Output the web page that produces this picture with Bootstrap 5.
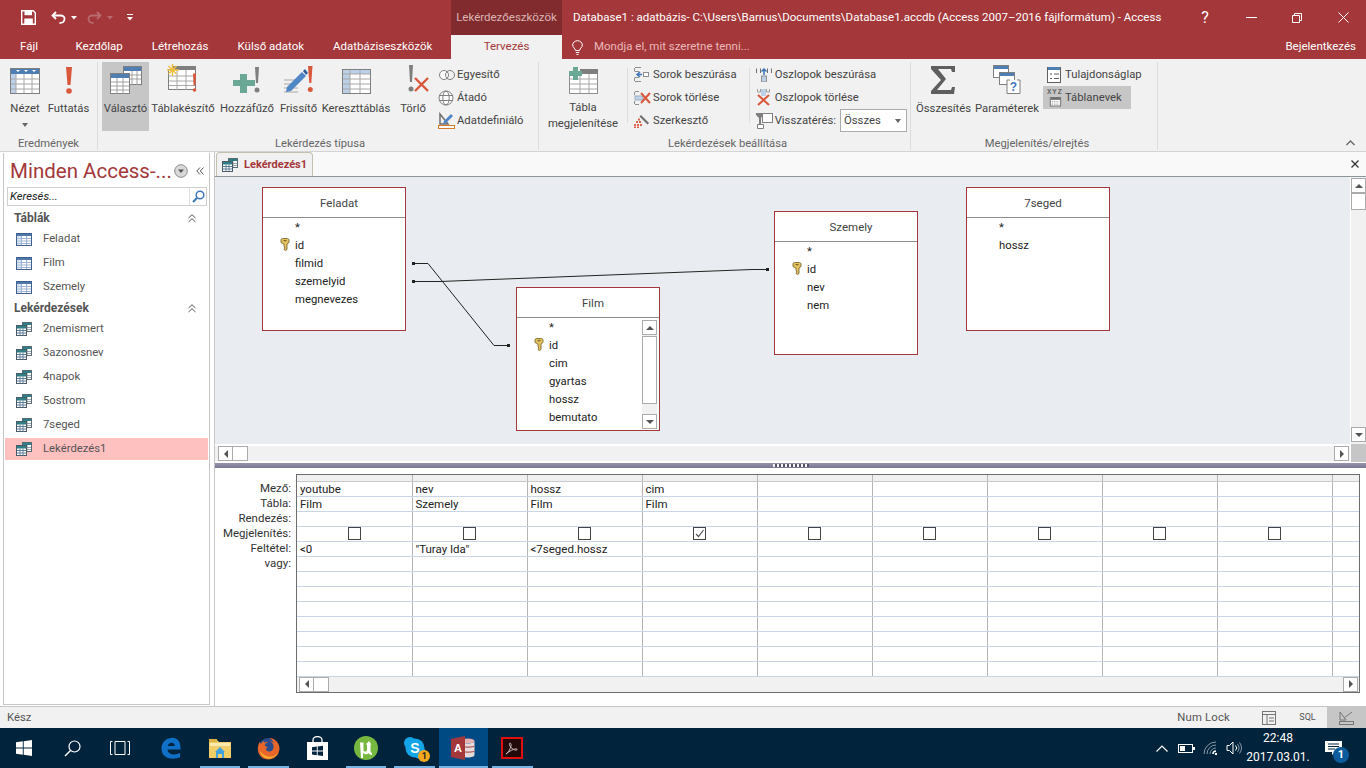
<!DOCTYPE html>
<html lang="hu">
<head>
<meta charset="UTF-8">
<title>Access</title>
<link href="https://cdn.jsdelivr.net/npm/bootstrap@5.3.0/dist/css/bootstrap.min.css" rel="stylesheet">
<style>
    html, body { height: 768px; overflow: hidden; }
    body { font-family: "Roboto", "Liberation Sans", sans-serif; font-size: 11.3px; color: #444; background: #fff; line-height: 1.2; }
    svg { display: block; flex: none; }

    /* title + tabs */
    .app-top { background: #a4373a; color: #fff; }
    .title-row { height: 35px; }
    .qat { width: 451px; flex: none; padding-left: 21px; }
    .qat-undo { margin-left: 15px; }
    .qat-caret { margin-left: 5px; }
    .qat-redo { margin-left: 10px; }
    .qat-more { margin-left: 14px; }
    .ctx-head { width: 111px; flex: none; background: #812b2e; color: #dcb4b4; font-size: 11.5px; }
    .doc-title { padding-left: 11px; font-size: 11.5px; }
    .win-btn { width: 46px; flex: none; }
    .tab-row { height: 24px; font-size: 11.5px; }
    .tab-left { width: 451px; flex: none; padding-left: 5.5px; }
    .rtab { padding: 0 14.5px; }
    .rtab-file { padding-right: 23px; }
    .rtab-on { width: 111px; flex: none; background: #f1f1f1; color: #a4373a; }
    .tell-me { color: #e9b9b9; padding-left: 10px; gap: 11px; }
    .sign-in { padding-right: 10px; }

    /* ribbon */
    .ribbon { height: 93px; background: #f1f1f1; border-bottom: 1px solid #d4d4d4; }
    .rgroup { height: 88px; margin-top: 3px; border-right: 1px solid #dcdcdc; flex: none; }
    .g-res { width: 98px; padding-left: 0; }
    .g-type { width: 441px; padding-left: 4px; }
    .g-set { width: 372px; padding-left: 6px; }
    .g-show { width: 247px; padding-left: 6px; }
    .g-res .rbody { padding-left: 4px; }
    .rbody { height: 69px; }
    .rcaption { height: 15px; line-height: 15px; margin-top: 5px; text-align: center; color: #666; font-size: 11.2px; }
    .bigbtn { height: 69px; text-align: center; color: #444; flex: none; }
    .bigbtn .ic { height: 32px; flex: none; }
    .bigbtn .lbl { margin-top: 8px; }
    .bigbtn .lbl2 { margin-top: 6px; line-height: 16px; }
    .bigbtn.on { background: #c6c6c6; }
    .w42 { width: 42px; } .w43 { width: 43px; } .w45 { width: 45px; } .w47 { width: 47px; }
    .w60 { width: 60px; } .w68 { width: 68px; } .w72 { width: 72px; } .w76 { width: 76px; }
    .w53 { width: 53px; } .w66 { width: 66px; } .w110 { width: 110px; } .w88 { width: 88px; }
    .caret-d { margin-top: 7px; width: 0; height: 0; border: 3px solid transparent; border-top: 4px solid #666; border-bottom: 0; }
    .smallcol { padding-left: 4px; }
    .smallcol-top { padding-top: 1px; }
    .smallrow { height: 23px; gap: 2px; padding: 0 3px 0 0; white-space: nowrap; }
    .smallrow.on { background: #c6c6c6; }
    .smallrow .ic { width: 17px; flex: none; }
    .show-col { margin-left: 3px; padding-top: 1px; }
    .show-col .smallrow { padding-left: 4px; gap: 3px; }
    .show-col .ic { width: 15px; }
    .rsep { width: 1px; height: 55px; background: #dcdcdc; margin: 6px 6px 0; flex: none; }
    .ret-select { width: 67px; height: 23px; background: #fff; border: 1px solid #ababab; padding: 0 5px 0 3px; margin-left: 2px; }
    .ribbon-fold { flex-grow: 1; padding-right: 11px; padding-bottom: 5px; }

    /* work area */
    .workarea { height: 554px; }
    .navwrap { width: 215px; flex: none; border-right: 1px solid #c6c6c6; padding: 1px 4px 1px 3px; }
    .navbox { height: 100%; border: 1px solid #c6c6c6; border-top: 0; padding: 0 1px; }
    .nav-title { height: 33px; padding: 3px 0 0 5px; }
    .nav-title span { font-size: 20.5px; color: #a4373a; white-space: nowrap; }
    .nav-drop { margin-left: 2px; }
    .nav-fold { margin-left: 8px; }
    .nav-search { height: 19px; margin: 1px 1px 0 2px; border: 1px solid #d0d0d0; font-style: italic; color: #222; padding-left: 2px; }
    .nav-glass { width: 17px; height: 17px; }
    .nav-head { height: 18px; padding: 0 12px 0 9px; font-weight: 700; font-size: 12px; color: #555; }
    .nav-head-first { margin-top: 3px; }
    .nav-item { height: 24px; padding-left: 11px; gap: 11px; color: #555; }
    .nav-item.on { background: #ffc0c0; height: 22px; margin-top: 1px; }

    .docpane { width: 1151px; flex: none; }
    .doctabs { height: 25px; background: #f9f9f9; border-bottom: 1px solid #8c959a; padding-left: 1px; }
    .doctab { width: 97px; height: 24px; gap: 6px; background: #f1f1f1; border: 1px solid #c4c0b0; border-bottom: 0; border-radius: 4px 4px 0 0; padding-left: 5px; color: #a4373a; font-weight: 700; font-size: 11px; }
    .doc-close { padding-right: 7px; }
    .upper { height: 285px; }
    .canvas-col { width: 1135px; flex: none; }
    .qcanvas { position: relative; height: 267px; background: #e9edf1; overflow: hidden; }
    .qlines { position: absolute; left: 0; top: 0; }
    .qtable { position: absolute; width: 144px; height: 144px; background: #fff; border: 1px solid #a4373a; color: #222; }
    .qt-feladat { left: 47px; top: 10px; }
    .qt-film { left: 301px; top: 110px; }
    .qt-szemely { left: 559px; top: 34px; }
    .qt-seged { left: 751px; top: 10px; }
    .qhead { height: 30px; line-height: 31px; text-align: center; padding-left: 10px; border-bottom: 1px solid #8c8c8c; color: #444; font-size: 11.5px; }
    .qrows { position: relative; padding: 1px 0 0 32px; }
    .qrow { height: 18px; line-height: 18px; }
    .qkey { position: absolute; left: 17px; top: 20px; }
    .qscroll { position: absolute; right: 2px; top: 32px; width: 15px; height: 109px; background: #f1f1f1; }
    .sbtn { border: 1px solid #ababab; background: #fff; }
    .sbtn-s { width: 15px; height: 15px; flex: none; }
    .qthumb { height: 68px; margin: 1px 0 10px; }
    .hbar { height: 18px; background: #f1f1f1; border-top: 2px solid #fff; border-bottom: 1px solid #fff; padding: 0 1px 0 3px; }
    .hthumb { width: 16px; height: 15px; margin-left: -1px; }
    .vbar { width: 16px; background: #f1f1f1; border-left: 1px solid #fff; flex: none; }
    .vbar-top { height: 1px; }
    .vthumb { width: 15px; height: 17px; }
    .vbar-corner { height: 18px; background: #c6c6c6; margin-top: 2px; }
    .tri-u, .tri-d, .tri-l, .tri-r { width: 0; height: 0; border: 4px solid transparent; }
    .tri-u { border-bottom-color: #555; border-top: 0; }
    .tri-d { border-top-color: #555; border-bottom: 0; }
    .tri-l { border-right-color: #555; border-left: 0; }
    .tri-r { border-left-color: #555; border-right: 0; }
    .splitter { height: 6px; background: linear-gradient(#9795ad, #7a7890); border-top: 1px solid #fff; }
    .splitter i { display: block; width: 36px; height: 3px; background: repeating-linear-gradient(90deg, #f5f5f5 0 2px, #55546a 2px 4px); }

    /* design grid */
    .lower { height: 238px; padding-top: 6px; }
    .labels { width: 81px; flex: none; padding-top: 7px; text-align: right; padding-right: 5px; color: #333; font-size: 11.5px; }
    .labels div { height: 15px; line-height: 15px; white-space: nowrap; }
    .gridbox { width: 1064px; height: 219px; border: 1px solid #6d6d6d; overflow: hidden; }
    .dgrid { table-layout: fixed; border-collapse: collapse; width: 1150px; color: #222; font-size: 11.5px; }
    .dgrid td { width: 115px; height: 15px; padding: 0 0 0 3px; line-height: 14px; border-right: 1px solid #b5b5b5; border-bottom: 1px solid #c9d4e6; white-space: nowrap; }
    .dgrid tr.hd td { height: 6px; line-height: 1px; font-size: 1px; background: #f0f0f0; border-bottom: 1px solid #c9c9c9; }
    .dgrid td.ck { padding: 0; }
    .chk { width: 13px; height: 13px; border: 1px solid #444; margin: 0 auto; background: #fff; }
    .grid-hbar { height: 16px; background: #f1f1f1; padding: 0 1px 0 2px; }

    /* status + taskbar */
    .statusbar { height: 22px; background: #f1f1f1; border-top: 1px solid #c6c6c6; padding-left: 7px; color: #555; }
    .st-view { width: 39px; height: 21px; }
    .st-view.on { background: #c6c6c6; }
    .st-sql { font-size: 9px; }
    .st-numlock { margin-right: 19px; letter-spacing: .2px; }
    .taskbar { height: 40px; background: #01233b; color: #fff; }
    .tb-cell { width: 48px; height: 40px; flex: none; }
    .tb-app { width: 48.7px; height: 40px; position: relative; flex: none; }
    .tb-first { margin-left: 3px; }
    .tb-app.run::after { content: ""; position: absolute; left: 4px; right: 4px; bottom: 0; height: 2px; background: #74b4e4; }
    .tb-app.act { background: #004a84; }
    .tb-app.act::after { left: 0; right: 0; }
    .tb-badge { position: absolute; left: 28px; top: 22px; width: 12px; height: 12px; border-radius: 50%; background: #f5a81c; color: #222; font-size: 9px; font-weight: 700; line-height: 12px; text-align: center; }
    .tray-i { width: 24px; flex: none; }
    .tb-clock { width: 64px; text-align: center; font-size: 12px; line-height: 19px; flex: none; }
    .tb-action { position: relative; width: 56px; height: 40px; padding-left: 15px; flex: none; }
    .tb-count { position: absolute; left: 23px; top: 19px; width: 16px; height: 16px; border-radius: 50%; background: #0c5b9c; font-size: 11px; font-weight: 700; line-height: 16px; text-align: center; }
</style>
</head>
<body>
<svg width="0" height="0" class="position-absolute">
    <defs>
        <symbol id="navtable" viewBox="0 0 16 13">
            <rect x=".5" y=".5" width="15" height="12" fill="#fff" stroke="#3f5f8f"/>
            <rect x="1" y="1" width="14" height="2" fill="#4f78ad"/>
            <path d="M1 5.500h14M1 8h14M1 10.500h14M5.500 3v9M10.500 3v9" stroke="#9cb4d4"/>
            <rect x="1" y="3" width="4" height="9" fill="#bcd0e8" opacity=".6"/>
        </symbol>
        <symbol id="navquery" viewBox="0 0 16 14">
            <rect x="6.500" y=".5" width="9" height="9" fill="#fff" stroke="#5a6a72"/>
            <rect x="7" y="1" width="8" height="2" fill="#2f7f86"/>
            <path d="M7 5.500h8M7 7.500h8M11 3v6" stroke="#8fa0a8"/>
            <rect x=".5" y="3.500" width="10" height="10" fill="#fff" stroke="#4a5a66"/>
            <rect x="1" y="4" width="9" height="2.500" fill="#2f7f86"/>
            <path d="M1 8.500h9M1 11h9M4 6.500v7M7 6.500v7" stroke="#5f7f98"/>
        </symbol>
        <symbol id="keyicon" viewBox="0 0 10 13">
            <path d="M1 1.500 2.500.5h5L9 1.500v3L7 6v5.500L5.500 12.500 4 11.500l.8-.8-.8-.7.8-.8L4 8.500V6L1 4.500z" fill="#e4c35e" stroke="#7a6a30" stroke-width=".9"/>
            <rect x="3.500" y="2" width="3" height="1.300" fill="#7a6a30"/>
        </symbol>
    </defs>
</svg>

<header class="app-top">
    <div class="title-row d-flex align-items-center">
        <div class="qat d-flex align-items-center">
            <svg width="15" height="15" viewBox="0 0 15 15"><path d="M.7.7h11.500L14.300 2.800v11.500H.7z" fill="none" stroke="#fff" stroke-width="1.400"/><rect x="3.500" y="1" width="7.500" height="4.200" fill="#fff"/><rect x="3.300" y="8.500" width="8.500" height="5.500" fill="#fff"/></svg>
            <svg class="qat-undo" width="15" height="13" viewBox="0 0 15 13"><path d="M5 1 1.500 4.500 5 8M2 4.500h7.500c6 0 5 7.500-1 7.500" fill="none" stroke="#fff" stroke-width="1.800"/></svg>
            <svg class="qat-caret" width="6" height="4" viewBox="0 0 6 4"><path d="M0 0h6L3 3.500z" fill="#fff"/></svg>
            <svg class="qat-redo" width="15" height="13" viewBox="0 0 15 13"><path d="M10 1l3.500 3.500L10 8M13 4.500H5.500c-6 0-5 7.500 1 7.500" fill="none" stroke="#b96a6c" stroke-width="1.800"/></svg>
            <svg class="qat-caret" width="6" height="4" viewBox="0 0 6 4"><path d="M0 0h6L3 3.500z" fill="#b96a6c"/></svg>
            <svg class="qat-more" width="6" height="7" viewBox="0 0 6 7"><path d="M0 0h6v1H0zM0 3h6L3 6.500z" fill="#fff"/></svg>
        </div>
        <div class="ctx-head h-100 d-flex align-items-center justify-content-center">Lekérdezőeszközök</div>
        <div class="doc-title flex-grow-1 text-nowrap">Database1 : adatbázis- C:\Users\Barnus\Documents\Database1.accdb (Access 2007–2016 fájlformátum) - Access</div>
        <div class="win-btn text-center fs-6">?</div>
        <div class="win-btn d-flex justify-content-center"><svg width="11" height="1"><rect width="11" height="1" fill="#fff"/></svg></div>
        <div class="win-btn d-flex justify-content-center"><svg width="10" height="10" viewBox="0 0 10 10"><path d="M2.500 2.500V.5h7v7h-2M.5 2.500h7v7h-7z" fill="none" stroke="#fff"/></svg></div>
        <div class="win-btn d-flex justify-content-center"><svg width="11" height="11" viewBox="0 0 11 11"><path d="M.5.500l10 10M10.500.5l-10 10" stroke="#fff"/></svg></div>
    </div>
    <div class="tab-row d-flex align-items-center">
        <div class="tab-left d-flex text-nowrap">
            <span class="rtab rtab-file">Fájl</span>
            <span class="rtab">Kezdőlap</span>
            <span class="rtab">Létrehozás</span>
            <span class="rtab">Külső adatok</span>
            <span class="rtab">Adatbáziseszközök</span>
        </div>
        <div class="rtab-on h-100 d-flex align-items-center justify-content-center">Tervezés</div>
        <div class="tell-me d-flex align-items-center flex-grow-1">
            <svg width="11" height="15" viewBox="0 0 11 15"><path d="M3.500 10.500C3 8 .7 7.500.7 5a4.800 4.300 0 0 1 9.600 0c0 2.500-2.300 3-2.800 5.500zM3.800 12.500h3.400M4.500 14.500h2" fill="none" stroke="#fff"/></svg>
            <span>Mondja el, mit szeretne tenni...</span>
        </div>
        <div class="sign-in">Bejelentkezés</div>
    </div>
</header>

<section class="ribbon d-flex">
    <div class="rgroup g-res">
        <div class="rbody d-flex">
            <div class="bigbtn w42 d-flex flex-column align-items-center">
                <div class="ic d-flex align-items-end">
                    <svg width="30" height="26" viewBox="0 0 30 26"><rect x=".5" y=".5" width="29" height="25" fill="#fff" stroke="#7f7f7f"/><rect x="1" y="1" width="28" height="5" fill="#4f7eb3"/><path d="M6 2h4L8 4zM14 2h4l-2 2zM22 2h4l-2 2z" fill="#fff"/><rect x="1" y="6" width="5" height="19" fill="#bcd0e8"/><path d="M1 11h28M1 16h28M1 21h28M6 6v19M14 6v19M22 6v19" stroke="#a8a8a8"/></svg>
                </div>
                <div class="lbl">Nézet</div>
                <div class="caret-d"></div>
            </div>
            <div class="bigbtn w45 d-flex flex-column align-items-center">
                <div class="ic d-flex align-items-end">
                    <svg width="8" height="27" viewBox="0 0 8 27"><path d="M1 0h6L5.500 18h-3z" fill="#d9583b"/><circle cx="4" cy="24" r="2.800" fill="#d9583b"/></svg>
                </div>
                <div class="lbl">Futtatás</div>
            </div>
        </div>
        <div class="rcaption">Eredmények</div>
    </div>

    <div class="rgroup g-type">
        <div class="rbody d-flex">
            <div class="bigbtn w47 on d-flex flex-column align-items-center">
                <div class="ic d-flex align-items-end">
                    <svg width="32" height="28" viewBox="0 0 32 28"><rect x="13.500" y=".5" width="18" height="18" fill="#fff" stroke="#7f7f7f"/><rect x="14" y="1" width="17" height="4" fill="#4f7eb3"/><path d="M14 9h17M14 13h17M22 5v14M27 5v14" stroke="#a0a0a0"/><rect x=".5" y="7.500" width="19" height="20" fill="#fff" stroke="#7f7f7f"/><rect x="1" y="8" width="18" height="4" fill="#4f7eb3"/><path d="M1 16h18M1 20h18M1 24h18M7 12v16M13 12v16" stroke="#a0a0a0"/></svg>
                </div>
                <div class="lbl">Választó</div>
            </div>
            <div class="bigbtn w68 d-flex flex-column align-items-center">
                <div class="ic d-flex align-items-end">
                    <svg width="32" height="30" viewBox="0 0 32 30"><rect x="1.500" y="5.500" width="27" height="20" fill="#fff" stroke="#7f7f7f"/><rect x="6" y="2" width="23" height="4" fill="#7f7f7f"/><path d="M2 12h26M2 17h26M2 21.500h26M10 6v20M19 6v20" stroke="#a8a8a8"/><path d="M5.500 0v12M0 6h12M1.500 2l8 8M9.500 2l-8 8" stroke="#f0c040" stroke-width="1.500"/><path d="M26 9.500h3l-.6 12h-1.800z" fill="#d9583b"/><circle cx="27.500" cy="26" r="1.800" fill="#d9583b"/></svg>
                </div>
                <div class="lbl">Táblakészítő</div>
            </div>
            <div class="bigbtn w60 d-flex flex-column align-items-center">
                <div class="ic d-flex align-items-end">
                    <svg width="29" height="27" viewBox="0 0 29 27"><path d="M7 7h7v6h7v0h1v6h-8v7H7v-7H0v-6h7z" fill="#6aa795"/><path d="M22 0h4l-1 16h-2z" fill="#7f7f7f"/><circle cx="24" cy="23" r="2.500" fill="#7f7f7f"/></svg>
                </div>
                <div class="lbl">Hozzáfűző</div>
            </div>
            <div class="bigbtn w43 d-flex flex-column align-items-center">
                <div class="ic d-flex align-items-end">
                    <svg width="30" height="28" viewBox="0 0 30 28"><path d="M0 14h12M0 18h10M0 22h14M0 26h14" stroke="#a8a8a8"/><path d="M3 21l15-15 4 4-15 15-5 1z" fill="#4f86c6"/><path d="M19 5l2-2 3 4-2 2z" fill="#2f5f96"/><path d="M24 0h4.500l-1.200 17h-2z" fill="#d9583b"/><circle cx="26.300" cy="23.500" r="2.500" fill="#d9583b"/></svg>
                </div>
                <div class="lbl">Frissítő</div>
            </div>
            <div class="bigbtn w72 d-flex flex-column align-items-center">
                <div class="ic d-flex align-items-end">
                    <svg width="29" height="25" viewBox="0 0 29 25"><rect x=".5" y=".5" width="28" height="24" fill="#fff" stroke="#7f7f7f"/><rect x="1" y="1" width="27" height="4" fill="#bcd0e8"/><rect x="1" y="5" width="7" height="19" fill="#bcd0e8"/><path d="M1 5h27M1 10h27M1 15h27M1 20h27M8 1v23M18 1v23" stroke="#a8a8a8"/></svg>
                </div>
                <div class="lbl">Kereszttáblás</div>
            </div>
            <div class="bigbtn w42 d-flex flex-column align-items-center">
                <div class="ic d-flex align-items-end">
                    <svg width="34" height="29" viewBox="-10 0 34 29"><path d="M3 0h4L6 17H4z" fill="#7f7f7f"/><circle cx="5" cy="24" r="2.500" fill="#7f7f7f"/><path d="M9 13l13 13M22 13L9 26" stroke="#d9583b" stroke-width="2.400"/></svg>
                </div>
                <div class="lbl">Törlő</div>
            </div>
            <div class="smallcol smallcol-top">
                <div class="smallrow d-flex align-items-center">
                    <div class="ic"><svg width="18" height="10" viewBox="0 0 18 10"><circle cx="6" cy="5" r="4.500" fill="#fff" stroke="#7f7f7f"/><circle cx="12" cy="5" r="4.500" fill="none" stroke="#7f7f7f"/></svg></div><span>Egyesítő</span>
                </div>
                <div class="smallrow d-flex align-items-center">
                    <div class="ic"><svg width="16" height="16" viewBox="0 0 16 16"><circle cx="8" cy="8" r="7" fill="#fff" stroke="#7f7f7f"/><ellipse cx="8" cy="8" rx="3.200" ry="7" fill="none" stroke="#7f7f7f"/><path d="M1 5.500h14M1 10.500h14" stroke="#7f7f7f"/></svg></div><span>Átadó</span>
                </div>
                <div class="smallrow d-flex align-items-center">
                    <div class="ic"><svg width="17" height="17" viewBox="0 0 17 17"><path d="M2 2v10h8z" fill="none" stroke="#6f6f6f" stroke-width="1.500"/><path d="M6 9l7-7 2 2-7 7-3 1z" fill="#4f86c6"/><rect x=".5" y="13.500" width="16" height="3" fill="#fff" stroke="#d97a2b"/></svg></div><span>Adatdefiniáló</span>
                </div>
            </div>
        </div>
        <div class="rcaption">Lekérdezés típusa</div>
    </div>

    <div class="rgroup g-set">
        <div class="rbody d-flex">
            <div class="bigbtn w76 d-flex flex-column align-items-center">
                <div class="ic d-flex align-items-end">
                    <svg width="29" height="27" viewBox="0 0 29 27"><rect x=".5" y="4.500" width="28" height="22" fill="#fff" stroke="#8f8f8f"/><rect x="11" y="2" width="18" height="5" fill="#7f7f7f"/><path d="M1 12h27M1 17h27M1 22h27M11 7v19M20 7v19" stroke="#a8a8a8"/><path d="M4 0h5v4h4v5H9v4H4V9H0V4h4z" fill="#6aa795"/></svg>
                </div>
                <div class="lbl2">Tábla<br>megjelenítése</div>
            </div>
            <div class="rsep"></div>
            <div class="w110 smallcol-top">
                <div class="smallrow d-flex align-items-center">
                    <div class="ic"><svg width="15" height="15" viewBox="0 0 15 15"><path d="M1 .5h6M1 4.500h4M1 10.500h4M1 14.500h6M.5 1v3.500M.5 10.500V14" stroke="#8f8f8f"/><path d="M3 7.500h5M6 5L3 7.500 6 10" fill="none" stroke="#3f76b8" stroke-width="1.500"/><rect x="9.500" y="5.500" width="5" height="4" fill="#fff" stroke="#8f8f8f"/></svg></div><span>Sorok beszúrása</span>
                </div>
                <div class="smallrow d-flex align-items-center">
                    <div class="ic"><svg width="17" height="14" viewBox="0 0 17 14"><path d="M1 .5h4M1 13.500h4M.5 1v3M.5 10v3" stroke="#8f8f8f"/><rect x="1" y="5" width="8" height="4" fill="#bcd0e8" stroke="#a0b0c0"/><path d="M7 2l9 10M16 2L7 12" stroke="#d9583b" stroke-width="2"/></svg></div><span>Sorok törlése</span>
                </div>
                <div class="smallrow d-flex align-items-center">
                    <div class="ic"><svg width="16" height="14" viewBox="0 0 16 14"><path d="M7 1l8 8-1.500 1.500-8-8z" fill="#6f6f6f"/><path d="M5 5.500h.01M3 8h.01M6 8h.01M1 11h.01M4 11h.01M7 11h.01M1 13.500h.01M4 13.500h.01" stroke="#d9583b" stroke-width="1.800" stroke-linecap="square"/></svg></div><span>Szerkesztő</span>
                </div>
            </div>
            <div class="rsep"></div>
            <div class="smallcol-top">
                <div class="smallrow d-flex align-items-center">
                    <div class="ic"><svg width="16" height="14" viewBox="0 0 16 14"><path d="M.5 5V.5M4.500 5V.5M11.500 5V.5M15.500 5V.5" stroke="#6f6f6f"/><path d="M8 7V1M5.500 3.500 8 1l2.500 2.500" fill="none" stroke="#3f76b8" stroke-width="1.500"/><rect x="5.500" y="8" width="5" height="6" fill="#bcd0e8" stroke="#8f8f8f"/></svg></div><span>Oszlopok beszúrása</span>
                </div>
                <div class="smallrow d-flex align-items-center">
                    <div class="ic"><svg width="15" height="17" viewBox="0 0 15 17"><path d="M1.500 0v3h3V0M10.500 0v3h3V0" fill="none" stroke="#9f9f9f"/><rect x="5" y="0" width="5" height="7" fill="#bcd0e8"/><path d="M2 6l11 10M13 6L2 16" stroke="#d9583b" stroke-width="2"/></svg></div><span>Oszlopok törlése</span>
                </div>
                <div class="smallrow d-flex align-items-center">
                    <div class="ic"><svg width="17" height="16" viewBox="0 0 17 16"><path d="M0 0h7v2L5 5v6H3V5L0 2z" fill="#7f7f7f"/><rect x="6.500" y=".5" width="10" height="9" fill="#fff" stroke="#7f7f7f"/><path d="M1.500 11.500h6v4h-6z" fill="#fff" stroke="#7f7f7f"/></svg></div><span>Visszatérés:</span>
                    <div class="ret-select d-flex align-items-center justify-content-between"><span>Összes</span><span class="caret-d mt-0"></span></div>
                </div>
            </div>
        </div>
        <div class="rcaption">Lekérdezések beállítása</div>
    </div>

    <div class="rgroup g-show">
        <div class="rbody d-flex">
            <div class="bigbtn w53 d-flex flex-column align-items-center">
                <div class="ic d-flex align-items-end">
                    <svg width="25" height="28" viewBox="0 0 25 28"><path d="M0 0h24v6h-3l-1-3H7l8 10L6 24h14l1-3h3l-1 7H0v-3l10-11L0 3z" fill="#5f5f5f"/></svg>
                </div>
                <div class="lbl">Összesítés</div>
            </div>
            <div class="bigbtn w66 ms-1 d-flex flex-column align-items-center">
                <div class="ic d-flex align-items-end">
                    <svg width="28" height="29" viewBox="0 0 28 29"><rect x=".5" y=".5" width="15" height="12" fill="#fff" stroke="#7f7f7f"/><rect x="1" y="1" width="14" height="3" fill="#4f7eb3"/><rect x="6.500" y="7.500" width="15" height="12" fill="#fff" stroke="#7f7f7f"/><rect x="7" y="8" width="14" height="3" fill="#4f7eb3"/><path d="M17 15h-3v13.500h13V15h-3" fill="#fff" stroke="#7f7f7f"/><text x="16.800" y="26" font-size="12" font-weight="700" fill="#3f76b8" font-family="Liberation Sans">?</text></svg>
                </div>
                <div class="lbl">Paraméterek</div>
            </div>
            <div class="show-col">
                <div class="smallrow d-flex align-items-center">
                    <div class="ic"><svg width="14" height="16" viewBox="0 0 14 16"><rect x=".5" y=".5" width="13" height="15" fill="#fff" stroke="#5f5f5f"/><rect x="1" y="0" width="12" height="3" fill="#4f7eb3"/><path d="M3 7h2M7 7h5M3 11.500h2M7 11.500h5" stroke="#5f5f5f"/></svg></div><span>Tulajdonságlap</span>
                </div>
                <div class="smallrow on w88 d-flex align-items-center">
                    <div class="ic"><svg width="16" height="20" viewBox="0 0 17 20"><text x="0" y="6" font-size="7" font-weight="700" letter-spacing="1" fill="#5f5f5f" font-family="Liberation Sans">XYZ</text><rect x="3.500" y="9.500" width="11" height="9" fill="#fff" stroke="#6f6f6f"/><rect x="4" y="10" width="10" height="2" fill="#6f6f6f"/><path d="M5 14h8M5 16.500h8" stroke="#8f8f8f" stroke-dasharray="1.500 1"/></svg></div><span>Táblanevek</span>
                </div>
            </div>
        </div>
        <div class="rcaption">Megjelenítés/elrejtés</div>
    </div>

    <div class="ribbon-fold d-flex justify-content-end align-items-end">
        <svg width="9" height="6" viewBox="0 0 9 6"><path d="M.5 5l4-4 4 4" fill="none" stroke="#666" stroke-width="1.300"/></svg>
    </div>
</section>

<main class="workarea d-flex">
    <aside class="navwrap">
        <div class="navbox">
            <div class="nav-title d-flex align-items-center">
                <span>Minden Access-...</span>
                <svg class="nav-drop" width="14" height="14" viewBox="0 0 14 14"><circle cx="7" cy="7" r="6.300" fill="#d8d8d8" stroke="#8a8a8a"/><path d="M4 5.500h6L7 9z" fill="#555"/></svg>
                <svg class="nav-fold" width="8" height="8" viewBox="0 0 8 8"><path d="M4 .5.800 4 4 7.500M7.500.5 4.300 4l3.200 3.500" fill="none" stroke="#555"/></svg>
            </div>
            <div class="nav-search d-flex align-items-center justify-content-between">
                <span>Keresés...</span>
                <span class="nav-glass d-flex align-items-center justify-content-center border-start">
                    <svg width="13" height="13" viewBox="0 0 13 13"><circle cx="8" cy="5" r="3.800" fill="#fff" stroke="#3f76b8" stroke-width="1.500"/><path d="M5.200 7.800 1 12" stroke="#3f76b8" stroke-width="2"/></svg>
                </span>
            </div>
            <div class="nav-head nav-head-first d-flex align-items-center justify-content-between"><span>Táblák</span>
                <svg width="8" height="9" viewBox="0 0 8 9"><path d="M.5 4 4 .7 7.500 4M.5 8 4 4.700 7.500 8" fill="none" stroke="#555"/></svg></div>
            <div class="nav-item d-flex align-items-center"><svg width="16" height="13"><use href="#navtable"/></svg><span>Feladat</span></div>
            <div class="nav-item d-flex align-items-center"><svg width="16" height="13"><use href="#navtable"/></svg><span>Film</span></div>
            <div class="nav-item d-flex align-items-center"><svg width="16" height="13"><use href="#navtable"/></svg><span>Szemely</span></div>
            <div class="nav-head d-flex align-items-center justify-content-between"><span>Lekérdezések</span>
                <svg width="8" height="9" viewBox="0 0 8 9"><path d="M.5 4 4 .7 7.500 4M.5 8 4 4.700 7.500 8" fill="none" stroke="#555"/></svg></div>
            <div class="nav-item d-flex align-items-center"><svg width="16" height="14"><use href="#navquery"/></svg><span>2nemismert</span></div>
            <div class="nav-item d-flex align-items-center"><svg width="16" height="14"><use href="#navquery"/></svg><span>3azonosnev</span></div>
            <div class="nav-item d-flex align-items-center"><svg width="16" height="14"><use href="#navquery"/></svg><span>4napok</span></div>
            <div class="nav-item d-flex align-items-center"><svg width="16" height="14"><use href="#navquery"/></svg><span>5ostrom</span></div>
            <div class="nav-item d-flex align-items-center"><svg width="16" height="14"><use href="#navquery"/></svg><span>7seged</span></div>
            <div class="nav-item on d-flex align-items-center"><svg width="16" height="14"><use href="#navquery"/></svg><span>Lekérdezés1</span></div>
        </div>
    </aside>

    <div class="docpane">
        <div class="doctabs d-flex justify-content-between">
            <div class="doctab d-flex align-items-center"><svg width="16" height="14"><use href="#navquery"/></svg><span>Lekérdezés1</span></div>
            <div class="doc-close d-flex align-items-center"><svg width="8" height="8" viewBox="0 0 8 8"><path d="M.5.500l7 7M7.500.5l-7 7" stroke="#333" stroke-width="1.300"/></svg></div>
        </div>

        <div class="upper d-flex">
            <div class="canvas-col">
                <div class="qcanvas">
                    <svg class="qlines" width="1135" height="267" viewBox="0 0 1135 267" fill="none" stroke="#222">
                        <!-- filmid -> id, szemelyid -> id -->
                        <path d="M198 86.500h15L279 168.500h14"/>
                        <path d="M198 104.500h27L537 92.500h15"/>
                        <g fill="#222" stroke="none">
                            <rect x="197" y="85" width="3" height="3"/><rect x="292" y="167" width="3" height="3"/>
                            <rect x="197" y="103" width="3" height="3"/><rect x="551" y="91" width="3" height="3"/>
                        </g>
                    </svg>
                    <div class="qtable qt-feladat">
                        <div class="qhead">Feladat</div>
                        <div class="qrows">
                            <div class="qrow">*</div>
                            <svg class="qkey" width="10" height="13"><use href="#keyicon"/></svg>
                            <div class="qrow">id</div><div class="qrow">filmid</div><div class="qrow">szemelyid</div><div class="qrow">megnevezes</div>
                        </div>
                    </div>
                    <div class="qtable qt-film">
                        <div class="qhead">Film</div>
                        <div class="qrows">
                            <div class="qrow">*</div>
                            <svg class="qkey" width="10" height="13"><use href="#keyicon"/></svg>
                            <div class="qrow">id</div><div class="qrow">cim</div><div class="qrow">gyartas</div><div class="qrow">hossz</div><div class="qrow">bemutato</div>
                        </div>
                        <div class="qscroll">
                            <div class="sbtn sbtn-s d-flex align-items-center justify-content-center"><i class="tri-u"></i></div>
                            <div class="sbtn qthumb"></div>
                            <div class="sbtn sbtn-s d-flex align-items-center justify-content-center"><i class="tri-d"></i></div>
                        </div>
                    </div>
                    <div class="qtable qt-szemely">
                        <div class="qhead">Szemely</div>
                        <div class="qrows">
                            <div class="qrow">*</div>
                            <svg class="qkey" width="10" height="13"><use href="#keyicon"/></svg>
                            <div class="qrow">id</div><div class="qrow">nev</div><div class="qrow">nem</div>
                        </div>
                    </div>
                    <div class="qtable qt-seged">
                        <div class="qhead">7seged</div>
                        <div class="qrows">
                            <div class="qrow">*</div><div class="qrow">hossz</div>
                        </div>
                    </div>
                </div>
                <div class="hbar d-flex justify-content-between">
                    <div class="d-flex">
                        <div class="sbtn sbtn-s d-flex align-items-center justify-content-center"><i class="tri-l"></i></div>
                        <div class="sbtn hthumb"></div>
                    </div>
                    <div class="sbtn sbtn-s d-flex align-items-center justify-content-center"><i class="tri-r"></i></div>
                </div>
            </div>
            <div class="vbar d-flex flex-column">
                <div class="vbar-top"></div>
                <div class="sbtn sbtn-s d-flex align-items-center justify-content-center"><i class="tri-u"></i></div>
                <div class="sbtn vthumb"></div>
                <div class="flex-grow-1"></div>
                <div class="sbtn sbtn-s d-flex align-items-center justify-content-center"><i class="tri-d"></i></div>
                <div class="vbar-corner"></div>
            </div>
        </div>

        <div class="splitter d-flex justify-content-center align-items-center"><i></i></div>

        <div class="lower d-flex">
            <div class="labels">
                <div>Mező:</div><div>Tábla:</div><div>Rendezés:</div><div>Megjelenítés:</div><div>Feltétel:</div><div>vagy:</div>
            </div>
            <div class="gridbox">
                <table class="dgrid">
                    <tr class="hd"><td></td><td></td><td></td><td></td><td></td><td></td><td></td><td></td><td></td><td></td></tr>
                    <tr><td>youtube</td><td>nev</td><td>hossz</td><td>cim</td><td></td><td></td><td></td><td></td><td></td><td></td></tr>
                    <tr><td>Film</td><td>Szemely</td><td>Film</td><td>Film</td><td></td><td></td><td></td><td></td><td></td><td></td></tr>
                    <tr><td></td><td></td><td></td><td></td><td></td><td></td><td></td><td></td><td></td><td></td></tr>
                    <tr>
                        <td class="ck"><div class="chk"></div></td><td class="ck"><div class="chk"></div></td><td class="ck"><div class="chk"></div></td>
                        <td class="ck"><div class="chk d-flex"><svg width="11" height="11" viewBox="0 0 11 11"><path d="M2 6l2.500 2.500L9.500 2" fill="none" stroke="#555" stroke-width="1.200"/></svg></div></td>
                        <td class="ck"><div class="chk"></div></td><td class="ck"><div class="chk"></div></td><td class="ck"><div class="chk"></div></td><td class="ck"><div class="chk"></div></td><td class="ck"><div class="chk"></div></td><td></td>
                    </tr>
                    <tr><td>&lt;0</td><td>"Turay Ida"</td><td>&lt;7seged.hossz</td><td></td><td></td><td></td><td></td><td></td><td></td><td></td></tr>
                    <tr><td></td><td></td><td></td><td></td><td></td><td></td><td></td><td></td><td></td><td></td></tr>
                    <tr><td></td><td></td><td></td><td></td><td></td><td></td><td></td><td></td><td></td><td></td></tr>
                    <tr><td></td><td></td><td></td><td></td><td></td><td></td><td></td><td></td><td></td><td></td></tr>
                    <tr><td></td><td></td><td></td><td></td><td></td><td></td><td></td><td></td><td></td><td></td></tr>
                    <tr><td></td><td></td><td></td><td></td><td></td><td></td><td></td><td></td><td></td><td></td></tr>
                    <tr><td></td><td></td><td></td><td></td><td></td><td></td><td></td><td></td><td></td><td></td></tr>
                    <tr><td></td><td></td><td></td><td></td><td></td><td></td><td></td><td></td><td></td><td></td></tr>
                    <tr><td></td><td></td><td></td><td></td><td></td><td></td><td></td><td></td><td></td><td></td></tr>
                </table>
                <div class="grid-hbar d-flex justify-content-between">
                    <div class="d-flex">
                        <div class="sbtn sbtn-s d-flex align-items-center justify-content-center"><i class="tri-l"></i></div>
                        <div class="sbtn hthumb"></div>
                    </div>
                    <div class="sbtn sbtn-s d-flex align-items-center justify-content-center"><i class="tri-r"></i></div>
                </div>
            </div>
        </div>
    </div>
</main>

<div class="statusbar d-flex align-items-center">
    <span class="flex-grow-1">Kész</span>
    <span class="st-numlock">Num Lock</span>
    <span class="st-view d-flex align-items-center justify-content-center"><svg width="14" height="14" viewBox="0 0 14 14"><rect x=".5" y=".5" width="13" height="13" fill="none" stroke="#777"/><path d="M.5 3.500h13M5 3.500v10M7 7h5M7 10h5" stroke="#777"/></svg></span>
    <span class="st-view st-sql d-flex align-items-center justify-content-center">SQL</span>
    <span class="st-view on d-flex align-items-center justify-content-center"><svg width="16" height="14" viewBox="0 0 16 14"><path d="M1 1v8h6z" fill="none" stroke="#777"/><path d="M5 7l8-6" stroke="#777"/><rect x=".5" y="10.500" width="14" height="3" fill="none" stroke="#777"/></svg></span>
</div>

<footer class="taskbar d-flex align-items-center">
    <div class="tb-cell d-flex align-items-center justify-content-center">
        <svg width="16" height="16" viewBox="0 0 16 16"><path d="M0 2.300 6.800 1.300v6.200H0zM7.700 1.200 16 0v7.500H7.700zM0 8.400h6.800v6.300L0 13.700zM7.700 8.400H16V16l-8.300-1.200z" fill="#fff"/></svg>
    </div>
    <div class="tb-cell d-flex align-items-center justify-content-center">
        <svg width="17" height="17" viewBox="0 0 17 17"><circle cx="10.500" cy="6.500" r="5.500" fill="none" stroke="#fff" stroke-width="1.200"/><path d="M6.500 10.500 1 16" stroke="#fff" stroke-width="1.400"/></svg>
    </div>
    <div class="tb-cell d-flex align-items-center justify-content-center">
        <svg width="20" height="14" viewBox="0 0 20 14"><path d="M2.500.5H.5v13h2M17.500.5h2v13h-2M5 .5h10v13H5z" fill="none" stroke="#fff"/></svg>
    </div>
    <div class="tb-app tb-first d-flex align-items-center justify-content-center">
        <svg width="20" height="22" viewBox="0 0 20 22"><path d="M19.500 12.500H6.500c.3 5 7.500 6.500 12.500 3.300v4.500c-7 3-18.500 1.700-18.500-8.800C.5 4 7 .2 12 .7c5 .5 8 4.500 7.500 11.800zM6.700 9h7c.2-4.500-6-4.500-7 0z" fill="#0f70c8"/></svg>
    </div>
    <div class="tb-app run d-flex align-items-center justify-content-center">
        <svg width="22" height="20" viewBox="0 0 22 20"><path d="M0 2h8l2 2h12v16H0z" fill="#f0ce6a"/><rect x="0" y="1" width="8" height="3" fill="#dcb347"/><rect x="1" y="5" width="20" height="3" fill="#fbe9ad"/><path d="M7 20v-6l-1 .1L11 9l5 5h-1v6z" fill="#3ea3dc"/><rect x="9" y="16" width="4" height="4" fill="#f0ce6a"/></svg>
    </div>
    <div class="tb-app run d-flex align-items-center justify-content-center">
        <svg width="23" height="23" viewBox="0 0 23 23"><circle cx="11.500" cy="11.500" r="10.500" fill="#2b4c8c"/><path d="M11.500 1C18 1 22.500 6 22.500 11.500S18 22.500 11.500 22.500 1 18 .8 12c-.1-3 1-5.500 2-7l1 2c.7-1 2-2.500 3.500-3 0 0-.3 1-.2 2 1-1 3-1.200 4-.8-2 .3-3.500 1.700-3.300 3.300.1 1 2 1.200 2.500 1.500.5.500-1 1.500-1.500 1.800 0 1 1.300 3 4 2.700 3-.3 4.500-3.500 3.500-6.500-.7-2-2.500-3.500-3-4 1.500.2 3 1.300 3.700 2.500C16.500 4 14 1.300 11.500 1z" fill="#e8662a"/><path d="M3 14c1 5 5 7.500 9 7.500 4 0 7.500-2.500 9-6-2 3-5 4.500-8.500 4.300-4-.3-7-2.500-9.500-5.800z" fill="#f6b42c"/></svg>
    </div>
    <div class="tb-app d-flex align-items-center justify-content-center">
        <svg width="21" height="24" viewBox="0 0 21 24"><path d="M6 6V4a4.500 3.500 0 0 1 9 0v2" fill="none" stroke="#fff" stroke-width="1.300"/><path d="M0 6h21v18H0z" fill="#fff"/><path d="M5 11.300 9.800 10.600V14.500H5zM10.700 10.500 16 9.800V14.500H10.700zM5 15.400H9.800v3.900L5 18.600zM10.700 15.400H16V20l-5.300-.7z" fill="#01233b"/></svg>
    </div>
    <div class="tb-app run d-flex align-items-center justify-content-center">
        <svg width="24" height="24" viewBox="0 0 24 24"><circle cx="12" cy="12" r="12" fill="#76b83f"/><path d="M6 6.500h3.500v7.500c0 2 3.500 2 3.500 0V8.500l-1.300.1L15 5l2.500 3.500H16.500V15c0 1 .7 1.700 1.500 2v2c-1.700 0-3-.7-3.500-2-1.500 2-5 1.500-5.500-.5V22H7z" fill="#fff"/></svg>
    </div>
    <div class="tb-app run d-flex align-items-center justify-content-center">
        <svg width="22" height="22" viewBox="0 0 22 22"><circle cx="6" cy="6" r="6" fill="#12a5e8"/><circle cx="16" cy="16" r="6" fill="#12a5e8"/><circle cx="11" cy="11" r="9.500" fill="#12a5e8"/><text x="11" y="16" text-anchor="middle" font-size="14" font-weight="700" fill="#fff" font-family="Liberation Sans">S</text></svg>
        <span class="tb-badge">1</span>
    </div>
    <div class="tb-app run act d-flex align-items-center justify-content-center">
        <svg width="24" height="24" viewBox="0 0 24 24"><ellipse cx="17" cy="5" rx="6.500" ry="2.500" fill="#e8b3b3"/><path d="M10.500 5v14c0 1.400 3 2.500 6.500 2.500s6.500-1.100 6.500-2.500V5c0 1.400-3 2.500-6.500 2.500S10.500 6.400 10.500 5z" fill="#e6dada"/><path d="M10.500 10c1 1.500 12 1.500 13 0M10.500 15c1 1.500 12 1.500 13 0" stroke="#a4373a" fill="none"/><path d="M0 3l14-3v24L0 21z" fill="#a4373a"/><text x="7" y="16" text-anchor="middle" font-size="11" font-weight="700" fill="#fff" font-family="Liberation Sans">A</text></svg>
    </div>
    <div class="tb-app run d-flex align-items-center justify-content-center">
        <svg width="22" height="22" viewBox="0 0 22 22"><rect x="1" y="1" width="20" height="20" fill="#230a0a" stroke="#e01010" stroke-width="2"/><path d="M5 17c2-1 4-4.500 5-8 .5-2-.5-3-1-3-.5 0-1 1 0 3 1 2 3 3.500 5 4 2 .4 2.500-.5 2-1-1-.6-5 0-11 5z" fill="none" stroke="#c9b7b7" stroke-width="1"/></svg>
    </div>

    <div class="flex-grow-1"></div>

    <div class="tray-i d-flex justify-content-center"><svg width="12" height="7" viewBox="0 0 12 7"><path d="M.5 6.500 6 1l5.500 5.500" fill="none" stroke="#fff" stroke-width="1.200"/></svg></div>
    <div class="tray-i d-flex justify-content-center"><svg width="17" height="9" viewBox="0 0 17 9"><rect x=".5" y=".5" width="14" height="8" fill="none" stroke="#fff"/><rect x="2" y="2" width="5" height="5" fill="#fff"/><rect x="15" y="3" width="2" height="3" fill="#fff"/></svg></div>
    <div class="tray-i d-flex justify-content-center"><svg width="14" height="14" viewBox="0 0 14 14"><path d="M1 13A12 12 0 0 1 13 1M4 13a9 9 0 0 1 9-9M7 13a6 6 0 0 1 6-6" fill="none" stroke="#8899a8"/><path d="M10 13a3 3 0 0 1 3-3" fill="none" stroke="#fff" stroke-width="1.500"/><circle cx="13" cy="13" r="1.200" fill="#fff"/></svg></div>
    <div class="tray-i d-flex justify-content-center"><svg width="16" height="14" viewBox="0 0 16 14"><path d="M1 4.500h2.500L7 1v12L3.500 9.500H1z" fill="none" stroke="#fff"/><path d="M9.500 4.500a3.500 3.500 0 0 1 0 5" fill="none" stroke="#fff"/><path d="M11.500 3a6 6 0 0 1 0 8M13.500 1.500a8.500 8.500 0 0 1 0 11" fill="none" stroke="#8899a8"/></svg></div>
    <div class="tb-clock"><div>22:48</div><div>2017.03.01.</div></div>
    <div class="tb-action d-flex align-items-center">
        <svg width="17" height="14" viewBox="0 0 17 14"><path d="M0 0h17v11H10l-3 3v-3H0z" fill="#fff"/><path d="M3 3h11M3 5.500h11M3 8h7" stroke="#01233b"/></svg>
        <span class="tb-count">1</span>
    </div>
</footer>
<script src="https://cdn.jsdelivr.net/npm/bootstrap@5.3.0/dist/js/bootstrap.bundle.min.js"></script>
</body>
</html>
